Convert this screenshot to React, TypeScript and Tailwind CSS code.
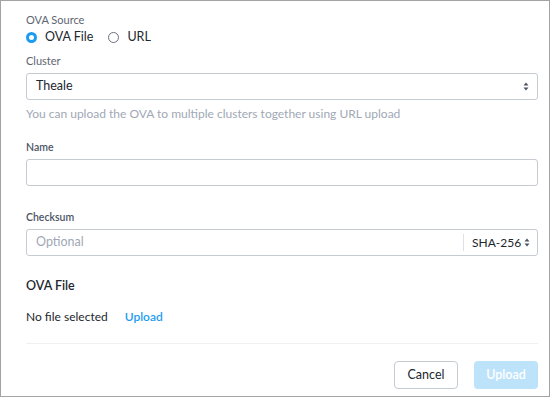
function Arrows() {
    return (
        <svg width="6" height="9" viewBox="0 0 6 9" className="shrink-0">
            <path d="M3 0.5 L5.5 3.5 H0.5 Z" fill="#4b5563" />
            <path d="M3 8.5 L5.5 5.5 H0.5 Z" fill="#4b5563" />
        </svg>
    )
}

export default function App() {
    return (
        <div className="w-[550px] h-[397px] border border-[#a3a3a3] bg-white flex flex-col pl-[25px] pr-[11px] text-[#22272e]" style={{ fontFamily: "Lato, 'Open Sans', sans-serif" }}>
            <div className="text-[11px] text-[#5d6570] mt-[12px] leading-[14px]">OVA Source</div>
            <div className="flex items-center mt-[2px] h-[17px] text-[12.5px]">
                <span className="w-[11px] h-[11px] rounded-full border-[3px] border-[#1b9cf2] bg-white" />
                <span className="ml-[8px]">OVA File</span>
                <span className="ml-[15px] w-[11px] h-[11px] rounded-full border border-[#6b7280]" />
                <span className="ml-[8px]">URL</span>
            </div>
            <div className="text-[11px] text-[#5d6570] mt-[8px] leading-[14px]">Cluster</div>
            <div className="mt-[5px] h-[27px] border border-[#c5cad3] rounded-[3px] flex items-center justify-between pl-[9px] pr-[8px] text-[12.5px]">
                <span>Theale</span>
                <Arrows />
            </div>
            <div className="text-[12px] text-[#a0a8b5] mt-[6px] leading-[16px]">You can upload the OVA to multiple clusters together using URL upload</div>
            <div className="text-[10.5px] font-semibold text-[#4b5563] mt-[18px] leading-[14px]">Name</div>
            <div className="mt-[5px] h-[27px] border border-[#c5cad3] rounded-[3px]" />
            <div className="text-[10.5px] font-semibold text-[#4b5563] mt-[24px] leading-[14px]">Checksum</div>
            <div className="mt-[5px] h-[27px] border border-[#c5cad3] rounded-[3px] flex items-center text-[12.5px]">
                <span className="flex-1 pl-[9px] text-[#a0a8b5]">Optional</span>
                <span className="w-px h-[17px] bg-[#dde1e6]" />
                <span className="w-[73px] flex items-center justify-between pl-[8px] pr-[7px] text-[12px]">SHA-256 <Arrows /></span>
            </div>
            <div className="text-[12.5px] font-semibold mt-[22px] leading-[16px]">OVA File</div>
            <div className="flex items-center mt-[15px] text-[12px] leading-[16px]">
                <span>No file selected</span>
                <span className="ml-[17px] text-[#1b9cf2] font-semibold">Upload</span>
            </div>
            <div className="mt-[18px] h-px bg-[#eef0f2]" />
            <div className="flex justify-end gap-[16px] mt-[17px]">
                <button className="w-[64px] h-[28px] border border-[#c5cad3] rounded-[4px] text-[12.5px] text-[#22272e]">Cancel</button>
                <button className="w-[64px] h-[28px] rounded-[4px] bg-[#bde3fb] text-white text-[12.5px] font-semibold">Upload</button>
            </div>
        </div>
    )
}
